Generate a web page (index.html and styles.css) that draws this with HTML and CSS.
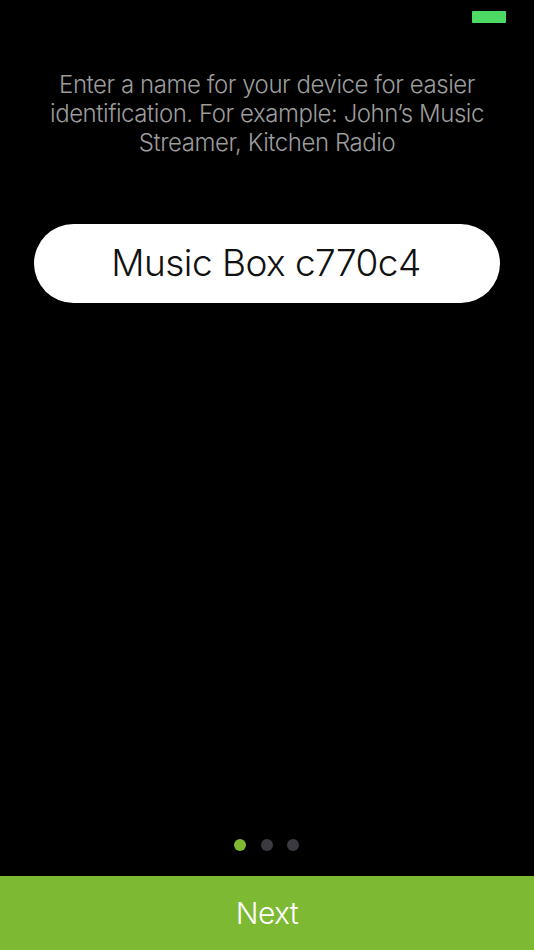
FILE: index.html
```html
<!DOCTYPE html>
<html lang="en">
<head>
<meta charset="utf-8">
<title>Name your device</title>
<link rel="stylesheet" href="styles.css">
</head>
<body>
<main class="screen">
  <div class="status"><span class="battery"></span></div>
  <p class="hint">Enter a name for your device for easier identification. For example: John’s Music Streamer, Kitchen Radio</p>
  <div class="name-field">Music Box c770c4</div>
  <div class="dots">
    <span class="dot dot-active"></span>
    <span class="dot"></span>
    <span class="dot"></span>
  </div>
  <div class="next">Next</div>
</main>
</body>
</html>
```
FILE: styles.css
```css
* { box-sizing: border-box; }
html, body { margin: 0; padding: 0; background: #000; }
.screen {
  width: 534px;
  height: 950px;
  display: flex;
  flex-direction: column;
  background: #000;
  font-family: Inter, "Liberation Sans", sans-serif;
  font-weight: 300;
  overflow: hidden;
}
.status {
  display: flex;
  justify-content: flex-end;
  padding: 11px 28px 0 0;
}
.battery {
  display: block;
  width: 34px;
  height: 12px;
  background: #4cd964;
  border-radius: 1px;
}
.hint {
  margin: 47px 0 0;
  padding: 0 40px;
  font-size: 24px;
  letter-spacing: -0.45px;
  line-height: 29px;
  text-align: center;
  color: #9c9c9c;
}
.name-field {
  margin: 67px 34px 0;
  padding-right: 2px;
  height: 79px;
  border-radius: 40px;
  background: #fff;
  color: #111;
  font-size: 37px;
  letter-spacing: -0.55px;
  line-height: 77px;
  text-align: center;
}
.dots {
  margin-top: auto;
  display: flex;
  justify-content: center;
  gap: 14.5px;
  padding: 0 1px 25px 0;
}
.dot {
  width: 12px;
  height: 12px;
  border-radius: 50%;
  background: #3a3a40;
}
.dot-active { background: #7db933; }
.next {
  height: 74px;
  background: #7db933;
  color: #fff;
  font-size: 30px;
  letter-spacing: -0.6px;
  line-height: 74px;
  text-align: center;
}
```
